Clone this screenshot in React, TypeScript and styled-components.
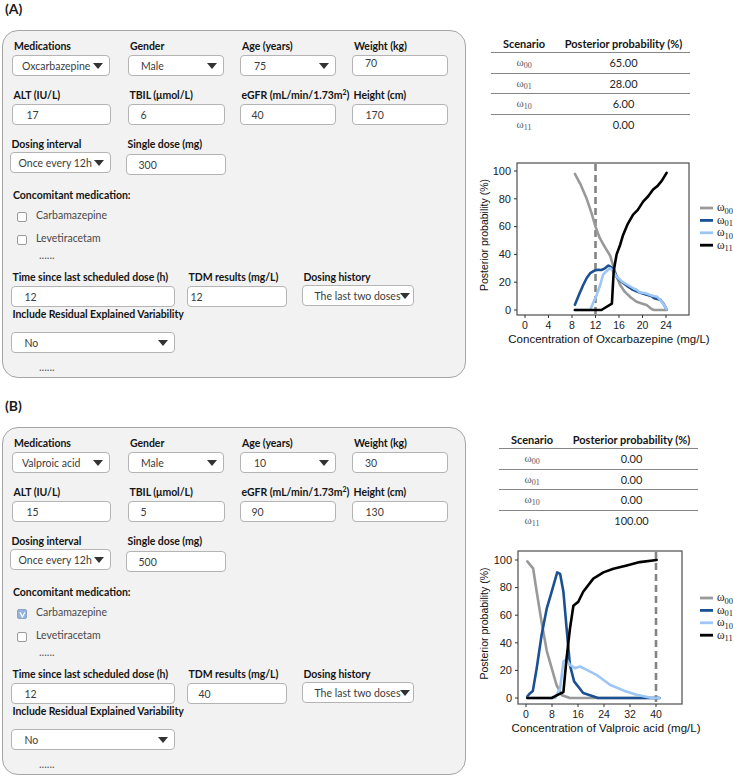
import React from "react";
import styled, { createGlobalStyle } from "styled-components";

const GlobalStyle = createGlobalStyle`
  html, body { margin: 0; padding: 0; background: #ffffff; }
  body {
    width: 733px;
    height: 776px;
    overflow: hidden;
    font-family: Lato, "Open Sans", "Liberation Sans", sans-serif;
    color: #1a1a1a;
  }
`;

/* ---------- page skeleton ---------- */

const Page = styled.main`
  display: flex;
  flex-direction: column;
  gap: 19px;
  width: 733px;
`;

const Section = styled.section`
  display: grid;
  grid-template-columns: 470px 263px;
`;

const FormColumn = styled.div`
  display: flex;
  flex-direction: column;
  padding-left: 2px;
`;

const SectionTag = styled.div`
  height: 30px;
  padding-left: 3px;
  font-size: 14px;
  font-weight: 700;
  line-height: 17px;
`;

const Panel = styled.div`
  box-sizing: border-box;
  width: 464px;
  height: 348px;
  padding: 8px 0 0 9px;
  background: #f2f2f2;
  border: 1.5px solid #a5a5a5;
  border-radius: 16px;
  display: flex;
  flex-direction: column;
`;

/* ---------- form parts ---------- */

const FieldRow = styled.div<{ $cols: string; $top: number; $shift?: number }>`
  display: grid;
  grid-template-columns: ${(p) => p.$cols};
  margin-top: ${(p) => p.$top}px;
  margin-left: ${(p) => p.$shift ?? 0}px;
  align-items: start;
`;

const Field = styled.div<{ $w: number }>`
  display: flex;
  flex-direction: column;
  width: ${(p) => p.$w}px;
`;

const Label = styled.div<{ $gap?: number }>`
  padding-left: 2px;
  margin-bottom: ${(p) => p.$gap ?? 2}px;
  font-size: 10.5px;
  font-weight: 700;
  line-height: 14px;
  letter-spacing: -0.05px;
  white-space: nowrap;
  color: #151515;

  sup {
    font-size: 7px;
    line-height: 0;
  }
`;

const Box = styled.div<{ $pad: number; $raise?: number }>`
  box-sizing: border-box;
  height: 21px;
  display: flex;
  align-items: center;
  padding: 0 6px ${(p) => (p.$raise ?? 0) * 2}px ${(p) => p.$pad}px;
  background: #ffffff;
  border: 1px solid #b4b4b4;
  border-radius: 4px;
  font-size: 10.5px;
  color: #3c3c3c;
  white-space: nowrap;
  overflow: hidden;
`;

const Caret = styled.span`
  flex: none;
  margin-left: auto;
  width: 0;
  height: 0;
  border-left: 5px solid transparent;
  border-right: 5px solid transparent;
  border-top: 6px solid #333333;
`;

const SubHeading = styled.div`
  margin-top: 13px;
  padding-left: 1px;
  font-size: 10.5px;
  font-weight: 700;
  line-height: 14px;
  color: #151515;
`;

const CheckList = styled.div`
  display: flex;
  flex-direction: column;
  margin: 1px 0 0 5px;
`;

const CheckItem = styled.div`
  display: flex;
  align-items: center;
  gap: 9px;
  height: 23px;
  font-size: 10.5px;
  color: #4a4a4a;
`;

const CheckBox = styled.span<{ $on: boolean }>`
  box-sizing: border-box;
  flex: none;
  width: 10px;
  height: 10px;
  margin-top: 5px;
  display: flex;
  align-items: center;
  justify-content: center;
  border: 1px solid ${(p) => (p.$on ? "#88a6cf" : "#9a9a9a")};
  border-radius: 2px;
  background: ${(p) => (p.$on ? "#93b3dc" : "#ffffff")};
`;

const Ellipsis = styled.div<{ $top: number }>`
  margin: ${(p) => p.$top}px 0 0 27px;
  font-size: 11px;
  line-height: 14px;
  color: #555555;
`;

/* ---------- result parts ---------- */

const ResultColumn = styled.div`
  display: flex;
  flex-direction: column;
`;

const ScenarioTable = styled.table<{ $top: number; $left: number }>`
  width: 199px;
  margin: ${(p) => p.$top}px 0 0 ${(p) => p.$left}px;
  border-collapse: collapse;
  table-layout: fixed;

  th {
    height: 18px;
    padding: 0;
    font-size: 11px;
    font-weight: 700;
    color: #151515;
    border-bottom: 1.5px solid #858585;
  }

  td {
    height: 19.5px;
    padding: 0;
    text-align: center;
    font-size: 11px;
    color: #262626;
    border-bottom: 1.5px solid #858585;
  }

  tbody tr:last-child td {
    border-bottom: none;
  }
`;

const Omega = styled.span`
  font-family: "Liberation Serif", "DejaVu Serif", serif;
  font-size: 11px;
  color: #555555;

  sub {
    font-size: 8px;
    vertical-align: -2px;
  }
`;

const ChartSvg = styled.svg<{ $top: number }>`
  display: block;
  margin-top: ${(p) => p.$top}px;
  overflow: hidden;
  font-family: "Liberation Sans", Arial, sans-serif;
`;

/* ---------- chart ---------- */

type Pt = [number, number];

type ChartSpec = {
  panel: { x: number; y: number; w: number; h: number };
  origin: { x: number; y: number };
  kx: number;
  ky: number;
  xTicks: number[];
  marker: number;
  xTitle: string;
  legendTop: number;
  series: { color: string; points: Pt[] }[];
};

const YTICKS = [0, 20, 40, 60, 80, 100];
const LEGEND = [
  { color: "#999999", sub: "00" },
  { color: "#1b5193", sub: "01" },
  { color: "#9dc6f5", sub: "10" },
  { color: "#000000", sub: "11" },
];

function Chart({ spec, top }: { spec: ChartSpec; top: number }) {
  const { panel, origin, kx, ky } = spec;
  const px = (d: number) => origin.x + d * kx;
  const py = (v: number) => origin.y - v * ky;
  const bottom = panel.y + panel.h;
  const midY = panel.y + panel.h / 2 - 4;
  const midX = panel.x + panel.w / 2 + 6;

  return (
    <ChartSvg width={263} height={192} viewBox="0 0 263 192" $top={top}>
      <rect x={panel.x} y={panel.y} width={panel.w} height={panel.h} fill="#ffffff" stroke="#4d4d4d" strokeWidth={1.2} />

      {YTICKS.map((t) => (
        <g key={`y${t}`}>
          <line x1={panel.x - 3} x2={panel.x} y1={py(t)} y2={py(t)} stroke="#333" strokeWidth={1} />
          <text x={panel.x - 6} y={py(t)} dy="0.35em" textAnchor="end" fontSize={11} fill="#222">
            {t}
          </text>
        </g>
      ))}

      {spec.xTicks.map((t) => (
        <g key={`x${t}`}>
          <line x1={px(t)} x2={px(t)} y1={bottom} y2={bottom + 3} stroke="#333" strokeWidth={1} />
          <text x={px(t)} y={bottom + 13.5} textAnchor="middle" fontSize={10.5} fill="#222">
            {t}
          </text>
        </g>
      ))}

      <text x={midX} y={bottom + 28} textAnchor="middle" fontSize={11.5} fill="#111">
        {spec.xTitle}
      </text>
      <text
        transform={`translate(14 ${midY}) rotate(-90)`}
        textAnchor="middle"
        dy="0.35em"
        fontSize={10.5}
        fill="#111"
      >
        Posterior probability (%)
      </text>

      <line
        x1={px(spec.marker)}
        x2={px(spec.marker)}
        y1={panel.y + 1}
        y2={bottom - 1}
        stroke="#848484"
        strokeWidth={2.6}
        strokeDasharray="7 4"
      />

      {spec.series.map((s, i) => (
        <polyline
          key={i}
          points={s.points.map(([d, v]) => `${px(d).toFixed(1)},${py(v).toFixed(1)}`).join(" ")}
          fill="none"
          stroke={s.color}
          strokeWidth={2.6}
          strokeLinejoin="round"
          strokeLinecap="round"
        />
      ))}

      {LEGEND.map((l, i) => {
        const y = spec.legendTop + i * 12.4;
        return (
          <g key={l.sub}>
            <line x1={230} x2={243} y1={y} y2={y} stroke={l.color} strokeWidth={2.8} />
            <text x={247} y={y} dy="0.3em" fontFamily="'Liberation Serif', 'DejaVu Serif', serif" fontSize={11.5} fill="#222">
              ω
              <tspan fontSize={8.5} dy="2.5">
                {l.sub}
              </tspan>
            </text>
          </g>
        );
      })}
    </ChartSvg>
  );
}

const oxcarbazepineChart: ChartSpec = {
  panel: { x: 47, y: 5, w: 172, h: 152 },
  origin: { x: 55, y: 152 },
  kx: 5.875,
  ky: 1.39,
  xTicks: [0, 4, 8, 12, 16, 20, 24],
  marker: 12,
  xTitle: "Concentration of Oxcarbazepine (mg/L)",
  legendTop: 50,
  series: [
    {
      color: "#999999",
      points: [
        [8.5, 98], [9.5, 90], [10.5, 80], [11.3, 70], [12, 60], [12.7, 52], [13.5, 46], [14.5, 39],
        [15, 32], [15.6, 24], [16.2, 18], [17, 13], [18, 9], [19, 6], [20, 4.5], [20.7, 3.5],
        [21.6, 0.5], [22, 0], [24.1, 0],
      ],
    },
    {
      color: "#1b5193",
      points: [
        [8.5, 3.8], [9.2, 11], [9.9, 18], [10.5, 23], [11.1, 26.5], [11.9, 28.5], [12.4, 29], [13, 28.8],
        [13.6, 30], [14.2, 32], [14.6, 31], [15, 29.5], [15.6, 24], [16.2, 21], [16.7, 19.4], [17.5, 17],
        [18.2, 15], [19, 13.4], [19.5, 12.5], [20.7, 11], [21.5, 10], [22, 8.5], [23, 7.4], [23.5, 5],
        [24.1, 0.5],
      ],
    },
    {
      color: "#9dc6f5",
      points: [
        [8.5, 0], [11.1, 0], [11.6, 5], [12.2, 11], [12.8, 18], [13.3, 25.4], [14, 28.5], [14.5, 30],
        [15, 28], [15.6, 24], [16.5, 20.5], [17.5, 18], [18.5, 15.5], [19, 14.5], [19.5, 12.8],
        [20.5, 12], [21.5, 10.5], [22.5, 9.5], [23.3, 6], [24.1, 0.5],
      ],
    },
    {
      color: "#000000",
      points: [
        [8.5, 0], [13, 0], [14.8, 4.5], [15.1, 28], [15.6, 40], [16.2, 47], [16.7, 54], [17.5, 62],
        [18.4, 68.6], [19.2, 72], [20.1, 78], [21, 82], [21.8, 86.6], [22.5, 89], [23.3, 93], [24.1, 98.6],
      ],
    },
  ],
};

const valproicChart: ChartSpec = {
  panel: { x: 48, y: 5, w: 164, h: 153 },
  origin: { x: 56, y: 152 },
  kx: 3.25,
  ky: 1.38,
  xTicks: [0, 8, 16, 24, 32, 40],
  marker: 40,
  xTitle: "Concentration of Valproic acid (mg/L)",
  legendTop: 52,
  series: [
    {
      color: "#999999",
      points: [
        [0.4, 99], [2.2, 94], [3.3, 77], [4.8, 55], [6.4, 34], [7.9, 21.6], [9.4, 9.6], [11, 2],
        [13.5, 0], [41, 0],
      ],
    },
    {
      color: "#1b5193",
      points: [
        [0.4, 1], [1, 3], [2.1, 5], [3.3, 21.6], [4.8, 45.6], [6.4, 65], [7.9, 77], [9.6, 91],
        [10.5, 90], [11.5, 77], [12.5, 50.5], [13.5, 24], [14.8, 12], [17.6, 3.6], [22.2, 0], [41, 0],
      ],
    },
    {
      color: "#9dc6f5",
      points: [
        [0.4, 0], [9, 0], [9.4, 2], [10.5, 7], [11.5, 26.4], [12.5, 28], [13.5, 24], [15.1, 21.6],
        [16.6, 22.8], [18.7, 20.4], [21.7, 16.8], [25.8, 9.6], [29.9, 5.5], [34, 2.4], [38.7, 0], [41, 0],
      ],
    },
    {
      color: "#000000",
      points: [
        [0.4, 0], [7.9, 0], [9.9, 2.4], [11.5, 4.3], [12.5, 29], [13.5, 50], [14.6, 66.8], [16.1, 69.7],
        [17.6, 77], [20.7, 86.5], [23.8, 91], [26.9, 93.7], [31, 96], [35, 98.5], [40.2, 100],
      ],
    },
  ],
};

/* ---------- form ---------- */

type Patient = {
  medication: string;
  age: string;
  weight: string;
  weightRaise?: number;
  alt: string;
  tbil: string;
  egfr: string;
  height: string;
  dose: string;
  elapsed: string;
  tdm: string;
  tdmPad: number;
  carbamazepine: boolean;
};

function Select({ value, pad }: { value: string; pad: number }) {
  return (
    <Box $pad={pad}>
      <span>{value}</span>
      <Caret />
    </Box>
  );
}

function CheckMark() {
  return (
    <svg width="7" height="7" viewBox="0 0 7 7">
      <path d="M1 1.2 L3.4 6 L6 1.2" fill="none" stroke="#ffffff" strokeWidth={1.3} />
    </svg>
  );
}

function InputPanel({ p }: { p: Patient }) {
  return (
    <Panel>
      <FieldRow $cols="116px 112px 112px 96px" $top={0}>
        <Field $w={98}>
          <Label>Medications</Label>
          <Select value={p.medication} pad={9} />
        </Field>
        <Field $w={96}>
          <Label>Gender</Label>
          <Select value="Male" pad={12} />
        </Field>
        <Field $w={96}>
          <Label>Age (years)</Label>
          <Select value={p.age} pad={13} />
        </Field>
        <Field $w={96}>
          <Label>Weight (kg)</Label>
          <Box $pad={12} $raise={p.weightRaise}>{p.weight}</Box>
        </Field>
      </FieldRow>

      <FieldRow $cols="116px 112px 112px 96px" $top={12} $shift={-0.5}>
        <Field $w={99}>
          <Label>ALT (IU/L)</Label>
          <Box $pad={14}>{p.alt}</Box>
        </Field>
        <Field $w={97}>
          <Label>TBIL (μmol/L)</Label>
          <Box $pad={12}>{p.tbil}</Box>
        </Field>
        <Field $w={96}>
          <Label>
            eGFR (mL/min/1.73m<sup>2</sup>)
          </Label>
          <Box $pad={11}>{p.egfr}</Box>
        </Field>
        <Field $w={96}>
          <Label>Height (cm)</Label>
          <Box $pad={13}>{p.height}</Box>
        </Field>
      </FieldRow>

      <FieldRow $cols="116px 100px" $top={12} $shift={-2.5}>
        <Field $w={101}>
          <Label $gap={1}>Dosing interval</Label>
          <Select value="Once every 12h" pad={8} />
        </Field>
        <Field $w={100}>
          <Label $gap={3}>Single dose (mg)</Label>
          <Box $pad={12}>{p.dose}</Box>
        </Field>
      </FieldRow>

      <SubHeading>Concomitant medication:</SubHeading>
      <CheckList>
        <CheckItem>
          <CheckBox $on={p.carbamazepine}>{p.carbamazepine && <CheckMark />}</CheckBox>
          Carbamazepine
        </CheckItem>
        <CheckItem>
          <CheckBox $on={false} />
          Levetiracetam
        </CheckItem>
      </CheckList>
      <Ellipsis $top={-1}>......</Ellipsis>

      <FieldRow $cols="176px 115px 112px" $top={8} $shift={-1.5}>
        <Field $w={164}>
          <Label>Time since last scheduled dose (h)</Label>
          <Box $pad={13}>{p.elapsed}</Box>
        </Field>
        <Field $w={100}>
          <Label>TDM results (mg/L)</Label>
          <Box $pad={p.tdmPad}>{p.tdm}</Box>
        </Field>
        <Field $w={112}>
          <Label $gap={1}>Dosing history</Label>
          <Select value="The last two doses" pad={12} />
        </Field>
      </FieldRow>

      <FieldRow $cols="176px" $top={0} $shift={-1.5}>
        <Field $w={164}>
          <Label $gap={11}>Include Residual Explained Variability</Label>
          <Select value="No" pad={13} />
        </Field>
      </FieldRow>
      <Ellipsis $top={7}>......</Ellipsis>
    </Panel>
  );
}

function ResultTable({ values, top, left }: { values: string[]; top: number; left: number }) {
  const subs = ["00", "01", "10", "11"];
  return (
    <ScenarioTable $top={top} $left={left}>
      <colgroup>
        <col style={{ width: 66 }} />
        <col style={{ width: 133 }} />
      </colgroup>
      <thead>
        <tr>
          <th>Scenario</th>
          <th>Posterior probability (%)</th>
        </tr>
      </thead>
      <tbody>
        {values.map((v, i) => (
          <tr key={subs[i]}>
            <td>
              <Omega>
                ω<sub>{subs[i]}</sub>
              </Omega>
            </td>
            <td>{v}</td>
          </tr>
        ))}
      </tbody>
    </ScenarioTable>
  );
}

const patientA: Patient = {
  medication: "Oxcarbazepine",
  age: "75",
  weight: "70",
  weightRaise: 3,
  alt: "17",
  tbil: "6",
  egfr: "40",
  height: "170",
  dose: "300",
  elapsed: "12",
  tdm: "12",
  tdmPad: 3,
  carbamazepine: false,
};

const patientB: Patient = {
  medication: "Valproic acid",
  age: "10",
  weight: "30",
  alt: "15",
  tbil: "5",
  egfr: "90",
  height: "130",
  dose: "500",
  elapsed: "12",
  tdm: "40",
  tdmPad: 11,
  carbamazepine: true,
};

export default function App() {
  return (
    <>
      <GlobalStyle />
      <Page>
        <Section>
          <FormColumn>
            <SectionTag>(A)</SectionTag>
            <InputPanel p={patientA} />
          </FormColumn>
          <ResultColumn>
            <ResultTable values={["65.00", "28.00", "6.00", "0.00"]} top={34} left={21} />
            <Chart spec={oxcarbazepineChart} top={24} />
          </ResultColumn>
        </Section>

        <Section>
          <FormColumn>
            <SectionTag>(B)</SectionTag>
            <InputPanel p={patientB} />
          </FormColumn>
          <ResultColumn>
            <ResultTable values={["0.00", "0.00", "0.00", "100.00"]} top={33} left={29} />
            <Chart spec={valproicChart} top={16} />
          </ResultColumn>
        </Section>
      </Page>
    </>
  );
}
